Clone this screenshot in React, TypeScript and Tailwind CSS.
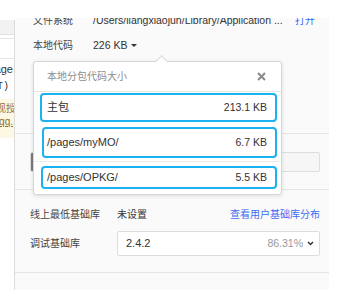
export default function App() {
  return (
    <div className="h-[290px] w-[364px] overflow-hidden bg-white pt-[18px] font-['Liberation_Sans','Noto_Sans_CJK_SC',sans-serif] text-[#333]">
      <div className="flex h-full">
        {/* clipped neighbour panel */}
        <div className="mt-[2px] w-[15px] shrink-0 overflow-hidden border-r border-[#dcdcdc] text-[11px]">
          <div className="h-[15px] border-b border-[#e0e0e0] bg-[#f2f2f2]" />
          <div className="mt-[3px] h-[21px] border-y border-[#e6e6e6] bg-white" />
          <div className="mt-[1px] flex h-[18px] items-center justify-end whitespace-nowrap pr-[1px]">page</div>
          <div className="flex h-[17px] items-center justify-end whitespace-nowrap pr-[5px] font-['Liberation_Mono',monospace] text-[10px]">(ST)</div>
          <div className="mt-[4px] h-[39px] bg-[#fcf8e3] pt-[2px] text-[#8a6d3b]">
            <div className="mr-[-2px] flex h-[14px] items-center justify-end whitespace-nowrap text-[10px]">现授</div>
            <div className="flex h-[13px] items-center justify-end whitespace-nowrap pr-[1px] text-[10px] underline">@qq.</div>
          </div>
        </div>

        {/* main panel */}
        <div className="relative w-[314px] shrink-0 overflow-hidden bg-[#fafafa]">
          <div className="mt-[-10px] h-[126px] border-b border-[#e4e4e4] pl-[18px] pr-[14px]">
            <div className="flex h-[25px] items-center">
              <span className="w-[60px] text-[10px] text-[#444]">文件系统</span>
              <span className="whitespace-nowrap text-[10.5px]">/Users/liangxiaojun/Library/Application ...</span>
              <span className="ml-auto text-[10px] text-[#3b6cf6]">打开</span>
            </div>
            <div className="flex h-[25px] items-center">
              <span className="w-[60px] text-[10px] text-[#444]">本地代码</span>
              <span className="text-[10.5px]">226 KB</span>
              <span className="ml-[4px] h-0 w-0 border-x-[3px] border-t-[3px] border-x-transparent border-t-[#333]" />
            </div>
          </div>

          <div className="h-[56px] border-b border-[#e4e4e4] pl-[15px] pr-[9px] pt-[18px]">
            <div className="flex h-[20px] overflow-hidden rounded-[2px] border border-[#dedede] bg-[#f6f6f6]">
              <div className="w-[3px] bg-[#7a7a7a]" />
            </div>
          </div>

          <div className="h-[83px] border-b border-[#e4e4e4] pl-[15px] pr-[9px] pt-[12px]">
            <div className="flex h-[24px] items-center">
              <span className="w-[87px] text-[10px] text-[#444]">线上最低基础库</span>
              <span className="text-[10px]">未设置</span>
              <span className="ml-auto text-[10px] text-[#3b6cf6]">查看用户基础库分布</span>
            </div>
            <div className="mt-[5px] flex h-[25px] items-center">
              <span className="w-[87px] text-[10px] text-[#444]">调试基础库</span>
              <div className="flex h-[25px] flex-1 items-center rounded-[2px] border border-[#dcdcdc] bg-white pl-[8px] pr-[5px]">
                <span className="text-[11px]">2.4.2</span>
                <span className="ml-auto text-[10.5px] text-[#999]">86.31%</span>
                <svg className="ml-[4px]" width="7" height="5" viewBox="0 0 7 5">
                  <path d="M1 1l2.5 2.5L6 1" fill="none" stroke="#333" strokeWidth="1.5" />
                </svg>
              </div>
            </div>
          </div>

          {/* popover */}
          <div className="absolute left-[18px] top-[43px] w-[249px] rounded-[3px] border border-[#d6d6d6] bg-white pb-[5px] shadow-[0_1px_4px_rgba(0,0,0,0.12)]">
            <div className="absolute left-[123px] top-[-5px] h-[9px] w-[9px] rotate-45 border-l border-t border-[#d6d6d6] bg-white" />
            <div className="flex h-[30px] items-center border-b border-[#e6e6e6] pl-[13px] pr-[15px]">
              <span className="text-[10px] text-[#8c8c8c]">本地分包代码大小</span>
              <svg className="ml-auto" width="9" height="9" viewBox="0 0 9 9">
                <path d="M1 1l7 7M8 1l-7 7" stroke="#8a8a8a" strokeWidth="2" />
              </svg>
            </div>
            <div className="ml-[6px] mr-[4px] mt-[1px] flex h-[29px] items-center rounded-[4px] border-2 border-[#1ab2f0] pl-[5px] pr-[8px] text-[11px]">
              <span>主包</span>
              <span className="ml-auto text-[10.5px]">213.1 KB</span>
            </div>
            <div className="ml-[8px] mr-[4px] mt-[5px] flex h-[31px] items-center rounded-[4px] border-2 border-[#1ab2f0] pl-[3px] pr-[8px] text-[11px]">
              <span>/pages/myMO/</span>
              <span className="ml-auto text-[10.5px]">6.7 KB</span>
            </div>
            <div className="mt-[3px] h-px bg-[#ececec]" />
            <div className="ml-[7px] mr-[4px] mt-[4px] flex h-[23px] items-center rounded-[4px] border-2 border-[#1ab2f0] pl-[4px] pr-[8px] text-[11px]">
              <span>/pages/OPKG/</span>
              <span className="ml-auto text-[10.5px]">5.5 KB</span>
            </div>
          </div>
        </div>
      </div>
    </div>
  );
}
